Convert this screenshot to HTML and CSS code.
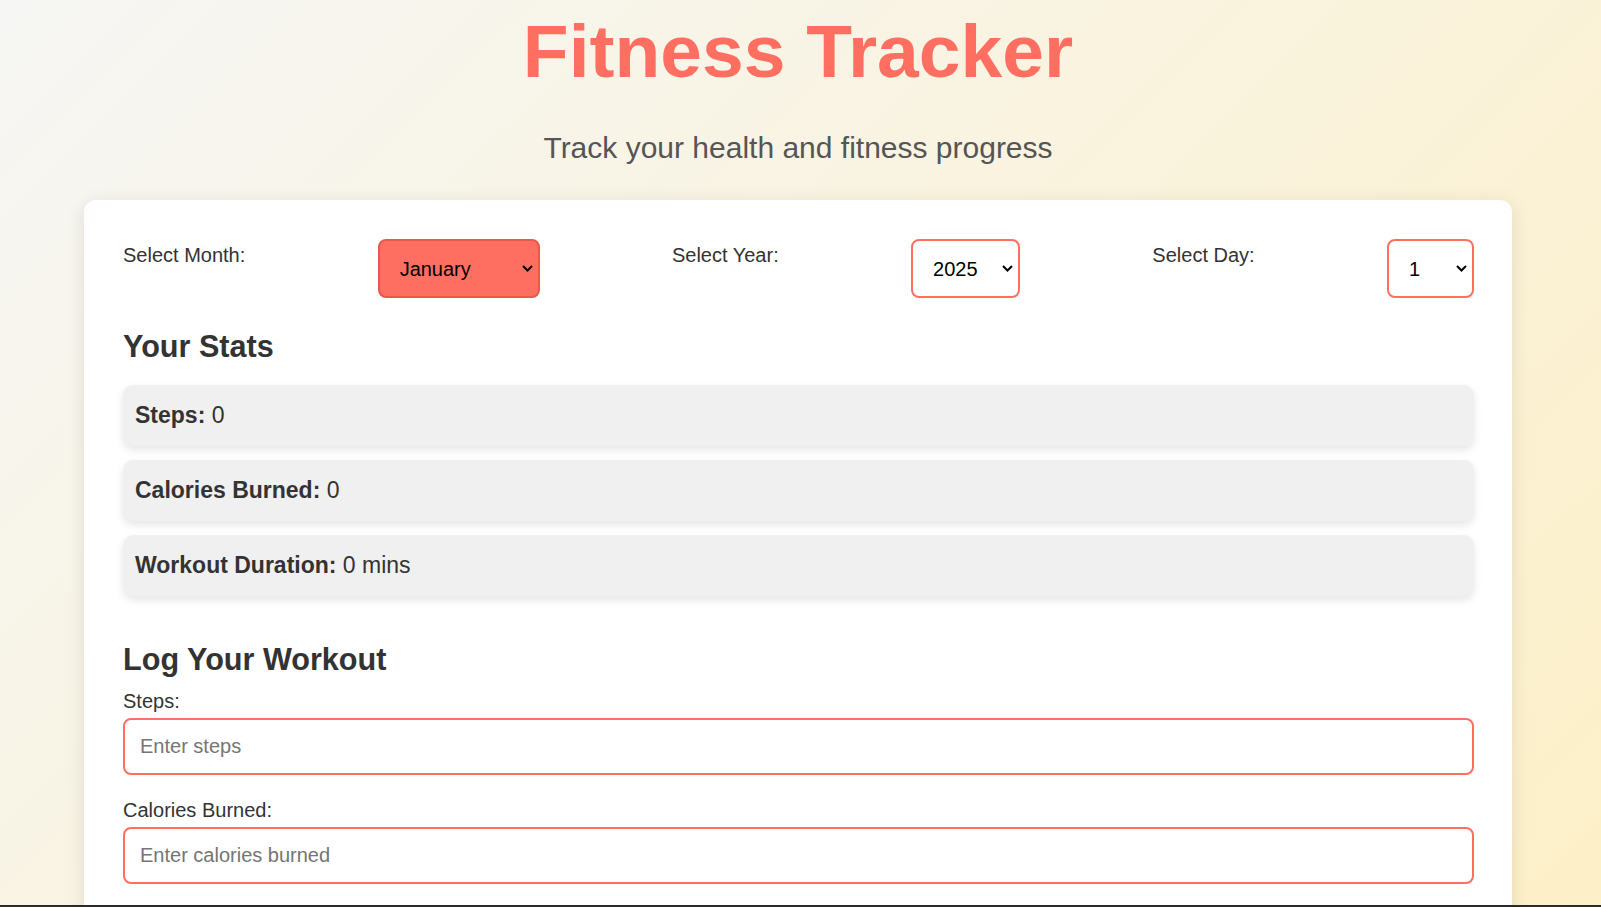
FILE: index.html
```html
<!DOCTYPE html>
<html lang="en">
<head>
<meta charset="utf-8">
<title>Fitness Tracker</title>
<link rel="stylesheet" href="styles.css">
</head>
<body>
<div class="page">
  <header class="header">
    <h1 class="title">Fitness Tracker</h1>
    <p class="subtitle">Track your health and fitness progress</p>
  </header>
  <main class="card">
    <div class="date-row">
      <label class="date-label" for="month">Select Month:</label>
      <select class="date-select active" id="month">
        <option>January</option><option>February</option><option>March</option><option>April</option>
        <option>May</option><option>June</option><option>July</option><option>August</option>
        <option>September</option><option>October</option><option>November</option><option>December</option>
      </select>
      <label class="date-label" for="year">Select Year:</label>
      <select class="date-select" id="year">
        <option>2023</option><option>2024</option><option selected>2025</option><option>2026</option>
      </select>
      <label class="date-label" for="day">Select Day:</label>
      <select class="date-select" id="day">
        <option>1</option><option>2</option><option>3</option><option>4</option><option>5</option>
        <option>6</option><option>7</option><option>8</option><option>9</option><option>10</option>
        <option>11</option><option>12</option><option>13</option><option>14</option><option>15</option>
        <option>16</option><option>17</option><option>18</option><option>19</option><option>20</option>
        <option>21</option><option>22</option><option>23</option><option>24</option><option>25</option>
        <option>26</option><option>27</option><option>28</option><option>29</option><option>30</option>
        <option>31</option>
      </select>
    </div>

    <section class="stats">
      <h2 class="section-title">Your Stats</h2>
      <div class="stat-list">
        <div class="stat"><strong>Steps:</strong> 0</div>
        <div class="stat"><strong>Calories Burned:</strong> 0</div>
        <div class="stat"><strong>Workout Duration:</strong> 0 mins</div>
      </div>
    </section>

    <section class="log">
      <h2 class="section-title log-title">Log Your Workout</h2>
      <label class="field-label" for="steps">Steps:</label>
      <input class="field-input" id="steps" type="number" placeholder="Enter steps">
      <label class="field-label" for="calories">Calories Burned:</label>
      <input class="field-input" id="calories" type="number" placeholder="Enter calories burned">
      <label class="field-label" for="duration">Workout Duration (mins):</label>
      <input class="field-input" id="duration" type="number" placeholder="Enter workout duration">
      <button class="save-btn" type="button">Save Workout</button>
    </section>
  </main>
</div>
<div class="screen-edge"></div>
</body>
</html>
```

FILE: styles.css
```css
html {
  min-height: 100%;
  background: linear-gradient(135deg, #f6f6f4 0%, #fdf0c8 100%) fixed;
}

body {
  margin: 0;
  padding-top: 8px;
  font-family: "Liberation Sans", Arial, sans-serif;
  color: #333;
}

.page {
  width: 1596px;
}

.header {
  text-align: center;
}

.title {
  margin: 0;
  font-size: 75px;
  line-height: 86px;
  font-weight: 700;
  color: #ff6f61;
}

.subtitle {
  margin: 36px 0 35px;
  font-size: 30px;
  line-height: 35px;
  color: #555;
}

.card {
  box-sizing: border-box;
  width: 1428px;
  margin: 0 auto 40px;
  padding: 39px 38px 40px 39px;
  background: #fff;
  border-radius: 12px;
  box-shadow: 0 4px 20px rgba(0, 0, 0, 0.1);
}

.date-row {
  display: flex;
  justify-content: space-between;
  align-items: flex-start;
  margin-bottom: 31px;
}

.date-label {
  margin-top: 5px;
  font-size: 20px;
  line-height: 23px;
  color: #333;
}

.date-select {
  -webkit-appearance: none;
  appearance: none;
  height: 59px;
  padding: 0 40px 0 20px;
  font-family: "Liberation Sans", Arial, sans-serif;
  font-size: 20px;
  color: #000;
  background-color: #fff;
  background-image: url("data:image/svg+xml,%3Csvg xmlns='http://www.w3.org/2000/svg' width='11' height='7' viewBox='0 0 11 7'%3E%3Cpolyline points='1,1 5.5,5.5 10,1' fill='none' stroke='%23000' stroke-width='2'/%3E%3C/svg%3E");
  background-repeat: no-repeat;
  background-position: right 5px center;
  background-size: 11px 7px;
  border: 2px solid #ff6f61;
  border-radius: 8px;
}

.date-select.active {
  background-color: #ff6f61;
  border-color: #e8594c;
}

.section-title {
  margin: 0 0 21px;
  font-size: 30.6px;
  line-height: 35px;
  font-weight: 700;
  color: #333;
}

.stat-list {
  display: flex;
  flex-direction: column;
  gap: 14px;
}

.stat {
  padding: 15px 12px;
  font-size: 23px;
  line-height: 31px;
  background: #f0f0f0;
  border-radius: 10px;
  box-shadow: 0 4px 8px rgba(0, 0, 0, 0.1);
}

.log {
  margin-top: 46px;
}

.log-title {
  margin-bottom: 13px;
}

.field-label {
  display: block;
  margin-bottom: 5px;
  font-size: 20px;
  line-height: 23px;
  color: #333;
}

.field-input {
  display: block;
  box-sizing: border-box;
  width: 100%;
  height: 57px;
  margin: 0 0 24px;
  padding: 0 15px;
  font-family: "Liberation Sans", Arial, sans-serif;
  font-size: 20px;
  color: #333;
  background: #fff;
  border: 2px solid #ff6f61;
  border-radius: 8px;
}

.field-input::placeholder {
  color: #757575;
}

.save-btn {
  padding: 15px 30px;
  font-family: "Liberation Sans", Arial, sans-serif;
  font-size: 20px;
  color: #fff;
  background: #ff6f61;
  border: none;
  border-radius: 8px;
}

.screen-edge {
  position: fixed;
  left: 0;
  right: 0;
  bottom: 0;
  height: 2px;
  background: #2b2b2b;
}
```
